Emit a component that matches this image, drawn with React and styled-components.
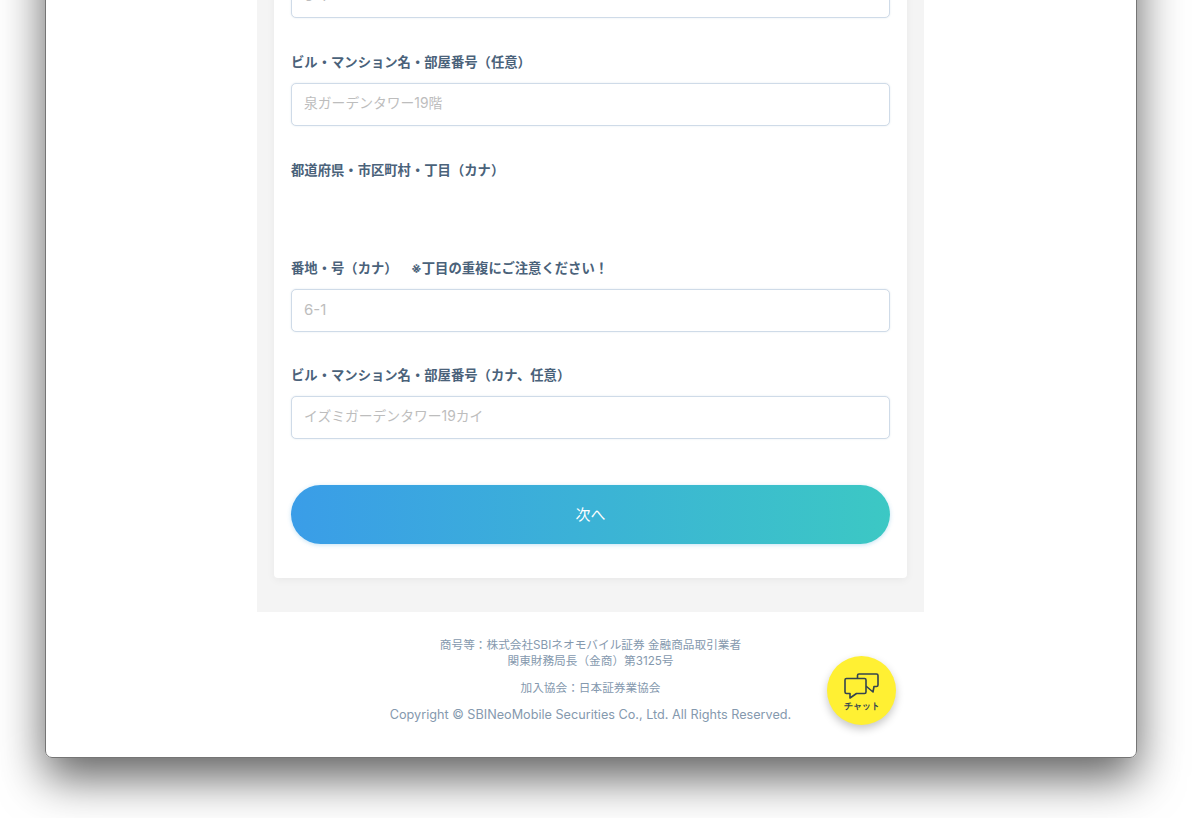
import React from 'react';
import styled, { createGlobalStyle } from 'styled-components';

const GlobalStyle = createGlobalStyle`
  html, body {
    margin: 0;
    padding: 0;
    background: #fff;
  }
  body {
    font-family: "Inter", "Noto Sans CJK JP", sans-serif;
  }
`

const Screen = styled.div`
  width: 1200px;
  height: 818px;
  overflow: hidden;
  padding: 0 63.5px 0 44.5px;
  box-sizing: border-box;
`

// the window runs on above the top of the photo, only its lower part is seen
const Window = styled.div`
  position: relative;
  width: 1092px;
  height: 857.5px;
  margin-top: -100px;
  box-sizing: border-box;
  display: flex;
  flex-direction: column;
  justify-content: flex-end;
  align-items: center;
  overflow: hidden;
  background: #fff;
  border-radius: 0 0 7px 7px;
  outline: 1px solid #757575;
  outline-offset: -1px;
  box-shadow: 0 20px 46px rgba(0, 0, 0, 0.62);
`

const Panel = styled.main`
  width: 667px;
  flex-shrink: 0;
  box-sizing: border-box;
  padding: 0 17px 34px;
  background: #f4f4f4;
`

const Card = styled.form`
  box-sizing: border-box;
  padding: 0 17px 34px;
  background: #fff;
  border-radius: 0 0 4px 4px;
  box-shadow: 0 2px 8px rgba(0, 0, 0, 0.05);
`

const Field = styled.div`
  margin-bottom: ${p => p.$gap}px;
`

const Label = styled.label`
  display: block;
  height: 21px;
  margin-bottom: 11px;
  font-size: 13.33px;
  line-height: 23px;
  font-weight: 700;
  color: #4a627a;
  white-space: pre;
`

const Input = styled.input`
  display: block;
  width: 100%;
  height: 43px;
  box-sizing: border-box;
  padding: 0 12px ${p => p.$lift}px;
  border: 1px solid #cfdbe8;
  border-radius: 5px;
  background: #fff;
  font: inherit;
  font-size: ${p => p.$size}px;
  box-shadow: 0 0 2px rgba(203, 214, 226, 0.6);
  &::placeholder {
    color: #bdbdbd;
    opacity: 1;
  }
`

const NextButton = styled.button`
  display: block;
  width: 100%;
  height: 59px;
  padding: 0 0 2px;
  border: 0;
  border-radius: 30px;
  background: linear-gradient(90deg, #3a9de8 0%, #3cc8c4 100%);
  box-shadow: 0 1px 4px rgba(60, 160, 220, 0.3);
  font: inherit;
  font-size: 15px;
  font-weight: 400;
  color: #fff;
`

const Footer = styled.footer`
  width: 667px;
  height: 145.5px;
  flex-shrink: 0;
  box-sizing: border-box;
  padding-top: 25px;
  text-align: center;
  color: #8599ae;
`

const FooterText = styled.p`
  margin: 0 0 ${p => p.$gap}px;
  font-size: 11.67px;
  line-height: 16px;
`

const Copyright = styled.p`
  margin: 0;
  font-size: 12.67px;
  line-height: 16px;
`

const ChatButton = styled.button`
  position: absolute;
  left: 782.5px;
  bottom: 32.5px;
  width: 69px;
  height: 69px;
  padding: 0;
  border: 0;
  border-radius: 50%;
  background: #fff033;
  box-shadow: 0 4px 8px rgba(0, 0, 0, 0.22);
  display: flex;
  flex-direction: column;
  align-items: center;
  color: #34444f;
`

const ChatIcon = styled.svg`
  width: 36px;
  height: 27px;
  margin-top: 17px;
`

const ChatLabel = styled.span`
  font-size: 9px;
  line-height: 12px;
  font-weight: 900;
`

const fields = [
  { label: 'ビル・マンション名・部屋番号（任意）', placeholder: '泉ガーデンタワー19階', size: 13.8, lift: 4, gap: 33 },
  { label: '都道府県・市区町村・丁目（カナ）', gap: 77 },
  { label: '番地・号（カナ）　\u2002※丁目の重複にご注意ください！', placeholder: '6-1', size: 15, lift: 3, gap: 32 },
  { label: 'ビル・マンション名・部屋番号（カナ、任意）', placeholder: 'イズミガーデンタワー19カイ', size: 13.8, lift: 3, gap: 46 },
]

const App = () => (
  <Screen>
    <GlobalStyle />
    <Window>
      <Panel>
        <Card>
          <Field $gap={33}>
            <Input placeholder="6-1" $size={15} $lift={3} />
          </Field>
          {fields.map(f => (
            <Field key={f.label} $gap={f.gap}>
              <Label>{f.label}</Label>
              {f.placeholder && <Input placeholder={f.placeholder} $size={f.size} $lift={f.lift} />}
            </Field>
          ))}
          <NextButton type="button">次へ</NextButton>
        </Card>
      </Panel>
      <Footer>
        <FooterText $gap={11}>
          商号等：株式会社SBIネオモバイル証券 金融商品取引業者<br />
          関東財務局長（金商）第3125号
        </FooterText>
        <FooterText $gap={11}>加入協会：日本証券業協会</FooterText>
        <Copyright>Copyright © SBINeoMobile Securities Co., Ltd. All Rights Reserved.</Copyright>
      </Footer>
      <ChatButton type="button">
        <ChatIcon viewBox="0 0 36 27" fill="#fff033" stroke="currentColor" strokeWidth="1.6" strokeLinejoin="round">
          <path d="M15 1h17.500a1.500 1.500 0 0 1 1.500 1.500V12a1.500 1.500 0 0 1-1.500 1.500H30l-1 5.500-6.500-5.500H15a1.500 1.500 0 0 1-1.500-1.500V2.500A1.500 1.500 0 0 1 15 1z" />
          <path d="M2.500 5.500h18A1.500 1.500 0 0 1 22 7v12a1.500 1.500 0 0 1-1.500 1.500h-8L6 25v-4.500H2.500A1.500 1.500 0 0 1 1 19V7a1.500 1.500 0 0 1 1.500-1.500z" />
        </ChatIcon>
        <ChatLabel>チャット</ChatLabel>
      </ChatButton>
    </Window>
  </Screen>
)

export default App;
